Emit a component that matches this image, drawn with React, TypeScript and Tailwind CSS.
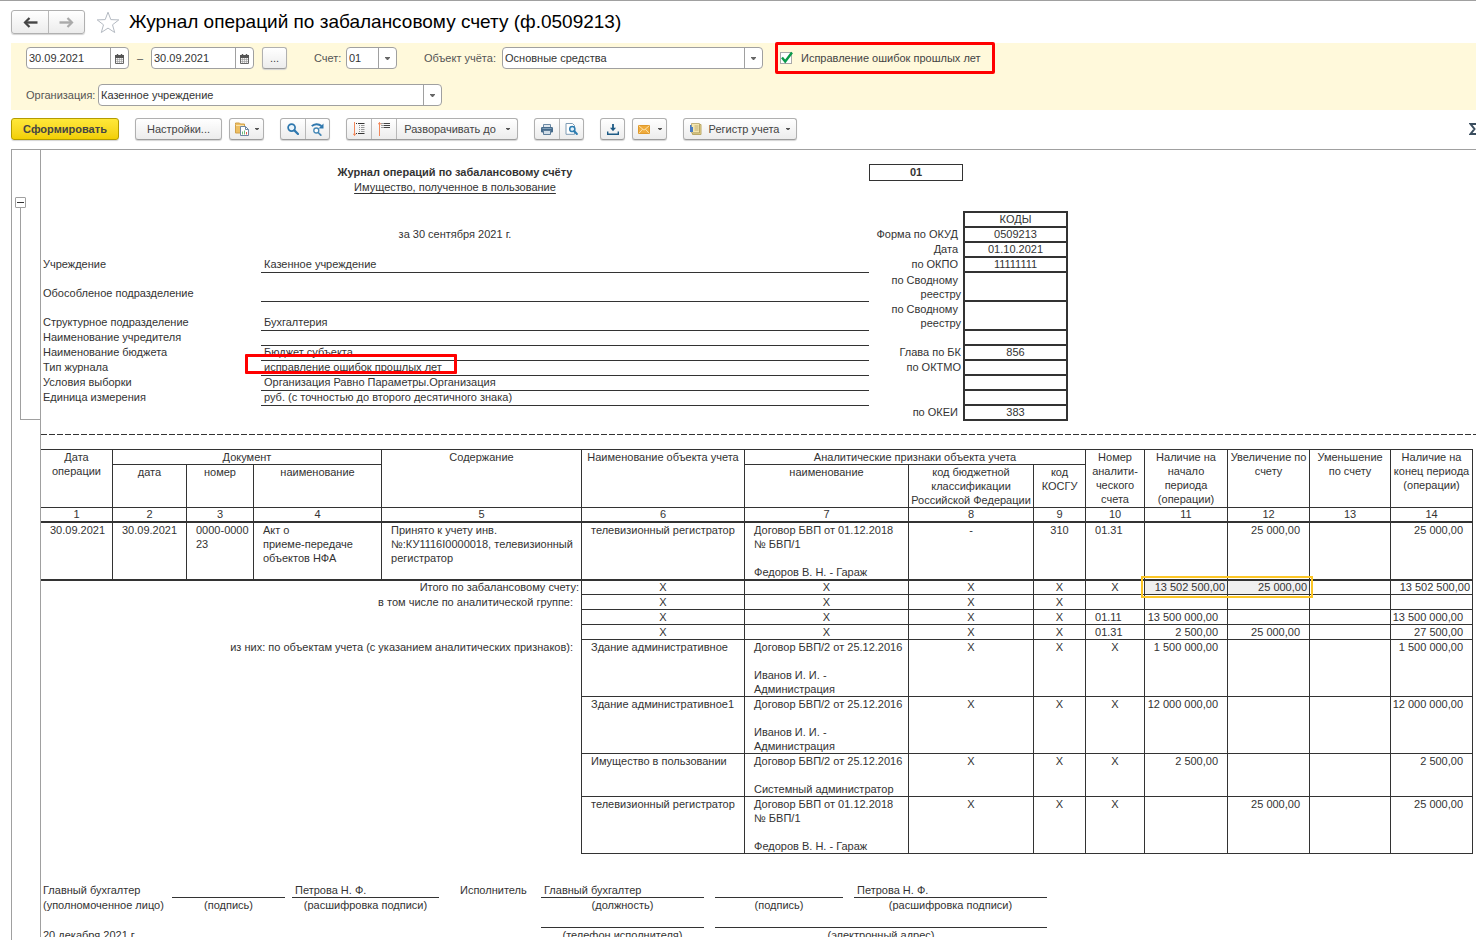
import type { ReactNode } from "react";
import clsx from "clsx";

type HeadRow = {
  label?: string;
  value?: string;
  line?: boolean;
  codeLabel?: string;
  codePad?: string;
  code?: string;
  tall?: boolean;
  marked?: boolean;
};

const headRows: HeadRow[] = [
  { codeLabel: "Дата", codePad: "pr-[5px]", code: "01.10.2021" },
  { label: "Учреждение", value: "Казенное учреждение", line: true, codeLabel: "по ОКПО", codePad: "pr-[5px]", code: "11111111" },
  { label: "Обособленое подразделение", line: true, codeLabel: "по Сводному \nреестру", tall: true },
  { label: "Структурное подразделение", value: "Бухгалтерия", line: true, codeLabel: "по Сводному \nреестру", tall: true },
  { label: "Наименование учредителя", line: true },
  { label: "Наименование бюджета", value: "Бюджет субъекта", line: true, codeLabel: "Глава по БК", code: "856" },
  { label: "Тип журнала", value: "исправление ошибок прошлых лет", line: true, codeLabel: "по ОКТМО", marked: true },
  { label: "Условия выборки", value: "Организация Равно Параметры.Организация", line: true },
  { label: "Единица измерения", value: "руб. (с точностью до второго десятичного знака)", line: true },
  { codeLabel: "по ОКЕИ", codePad: "pr-[5px]", code: "383" },
];

type ObjectRow = {
  label?: string;
  name: string;
  contract: string;
  account: string;
  start?: string;
  plus?: string;
  end?: string;
};

const objectRows: ObjectRow[] = [
  { label: "в том числе по аналитической группе:", name: "X", contract: "X", account: "" },
  { name: "X", contract: "X", account: "01.11", start: "13 500 000,00", end: "13 500 000,00" },
  { name: "X", contract: "X", account: "01.31", start: "2 500,00", plus: "25 000,00", end: "27 500,00" },
  {
    label: "из них: по объектам учета (с указанием аналитических признаков):",
    name: "Здание административное",
    contract: "Договор БВП/2 от 25.12.2016\n\nИванов И. И. -\nАдминистрация",
    account: "X",
    start: "1 500 000,00",
    end: "1 500 000,00",
  },
  {
    name: "Здание административное1",
    contract: "Договор БВП/2 от 25.12.2016\n\nИванов И. И. -\nАдминистрация",
    account: "X",
    start: "12 000 000,00",
    end: "12 000 000,00",
  },
  {
    name: "Имущество в пользовании",
    contract: "Договор БВП/2 от 25.12.2016\n\nСистемный администратор",
    account: "X",
    start: "2 500,00",
    end: "2 500,00",
  },
  {
    name: "телевизионный регистратор",
    contract: "Договор БВП от 01.12.2018\n№ БВП/1\n\nФедоров В. Н. - Гараж",
    account: "X",
    plus: "25 000,00",
    end: "25 000,00",
  },
];

/* ---------- Icons ---------- */

const ArrowIcon = ({ flip, color }: { flip?: boolean; color: string }) => (
  <svg width="15" height="11" viewBox="0 0 15 11" className={clsx(flip && "-scale-x-100")}>
    <path d="M2 5.5h12.500" stroke={color} strokeWidth="2.4" />
    <path d="M6.500 1 2 5.500 6.500 10" fill="none" stroke={color} strokeWidth="2.2" />
  </svg>
);

const StarIcon = () => (
  <svg width="24" height="23" viewBox="0 0 24 23">
    <path
      d="M12 1.2 14.8 8.6 22.8 8.9 16.5 13.8 18.7 21.5 12 17.1 5.3 21.5 7.5 13.8 1.2 8.9 9.2 8.6Z"
      fill="#fff"
      stroke="#b4bac2"
      strokeWidth="1"
    />
  </svg>
);

const CalendarIcon = () => (
  <svg width="9" height="10" viewBox="0 0 9 10">
    <path d="M.5 1.500h8V9.500h-8z" fill="#f4f4f4" stroke="#666" />
    <path d="M0 1h9v3H0z" fill="#555" />
    <path d="M2.500 0v2M6.500 0v2" stroke="#555" strokeWidth="1.400" />
    <path d="M1 5.500h7M1 7.500h7M2.500 4v5M4.500 4v5M6.500 4v5" stroke="#999" strokeWidth=".6" />
  </svg>
);

const Caret = () => (
  <svg width="5" height="3" viewBox="0 0 5 3">
    <path d="M0 0h5v.8L3 3H2L0 .8z" fill="#666" />
  </svg>
);

const SmallCaret = () => (
  <svg width="4" height="2" viewBox="0 0 4 2">
    <path d="M0 0h4v.6L2.600 2H1.400L0 .6z" fill="#555" />
  </svg>
);

const PasteIcon = () => (
  <svg width="14" height="14" viewBox="0 0 14 14">
    <path d="M.5 2.500V1h4l1 1h4v9h-9z" fill="#eebf62" stroke="#d0a04a" />
    <path d="M1 3.500h8" stroke="#fbe3ad" />
    <path d="M5.500 4.500h5l3 3v6h-8z" fill="#fff" stroke="#6d87a3" />
    <path d="M10.500 4.500v3h3" fill="none" stroke="#6d87a3" />
    <path d="M7.500 9.500v3M9.500 8.500v4" stroke="#6dba7b" />
    <path d="M11.500 10v2.500" stroke="#e2574c" />
  </svg>
);

const SearchIcon = () => (
  <svg width="12" height="12" viewBox="0 0 12 12">
    <circle cx="4.600" cy="4.600" r="3.500" fill="#eaf4fb" stroke="#2f78ae" strokeWidth="1.700" />
    <path d="m7.400 7.400 3.600 3.600" stroke="#2f78ae" strokeWidth="2.200" strokeLinecap="round" />
  </svg>
);

const SearchNextIcon = () => (
  <svg width="13" height="13" viewBox="0 0 13 13">
    <path d="M.8 3.200C3 .7 7.500.4 10.500 3" fill="none" stroke="#2f78ae" strokeWidth="1.900" />
    <path d="M12.500.5v5h-5z" fill="#2f78ae" />
    <circle cx="5.300" cy="7.500" r="2.500" fill="#fff" stroke="#4487b5" strokeWidth="1.300" />
    <path d="m7.200 9.500 2.600 2.700" stroke="#4487b5" strokeWidth="1.700" strokeLinecap="round" />
  </svg>
);

const ExpandIcon = () => (
  <svg width="12" height="14" viewBox="0 0 12 14">
    <path d="M1.500 0v13.500M0 11.500l1.500 2 1.500-2" fill="none" stroke="#f2875a" />
    <path d="M3 1.500h1M5 1.500h6.500" stroke="#333" />
    <path d="M6 3.500h1M8 3.500h3.500M6 5.500h1M8 5.500h3.500M6 7.500h1M8 7.500h3.500M6 9.500h1M8 9.500h3.500" stroke="#999" />
    <path d="M3 11.500h1M5 11.500h6.500" stroke="#333" />
  </svg>
);

const CollapseIcon = () => (
  <svg width="12" height="14" viewBox="0 0 12 14">
    <path d="M1.500 .5V14M0 2.500l1.500-2 1.500 2" fill="none" stroke="#f2875a" />
    <path d="M3.500 1.500h1M5.500 1.500H12M3.500 3.500h1M5.500 3.500H12M3.500 5.500h1M5.500 5.500H12" stroke="#444" />
  </svg>
);

const PrinterIcon = () => (
  <svg width="12" height="11" viewBox="0 0 12 11">
    <path d="M2.500.5h7v3h-7z" fill="#dfe7ee" stroke="#6c8aa5" />
    <rect y="3" width="12" height="5.500" rx="1.300" fill="#466b8c" />
    <path d="M2.500 6.500h7v4h-7z" fill="#cfdce7" stroke="#5c7c98" />
    <path d="M1.500 4.500h9" stroke="#8fabc3" strokeWidth=".8" />
  </svg>
);

const PreviewIcon = () => (
  <svg width="13" height="12" viewBox="0 0 13 12">
    <path d="M1 .5h6.500l2 2v8.800H1z" fill="#fff" stroke="#7f9cb5" />
    <circle cx="7.300" cy="6" r="2.600" fill="#e4f1fa" stroke="#2c7cb0" strokeWidth="1.500" />
    <path d="m9.200 8 2.700 3" stroke="#2c7cb0" strokeWidth="1.900" strokeLinecap="round" />
  </svg>
);

const DownloadIcon = () => (
  <svg width="12" height="11" viewBox="0 0 12 11">
    <path d="M6 0v5" stroke="#1c5a85" strokeWidth="1.800" />
    <path d="M3 3.800h6L6 7.200z" fill="#1c5a85" />
    <path d="M.7 7.500v2.700h10.600V7.500" fill="none" stroke="#1c5a85" strokeWidth="1.400" />
  </svg>
);

const MailIcon = () => (
  <svg width="12" height="9" viewBox="0 0 12 9">
    <path d="M.5.5h11v8H.5z" fill="#efab3c" stroke="#e09a2c" />
    <path d="m.8.8 5.200 4.400L11.200.8M1 8.200l3.600-4M11 8.200l-3.600-4" fill="none" stroke="#fde6b5" strokeWidth=".9" />
  </svg>
);

const RegisterIcon = () => (
  <svg width="12" height="12" viewBox="0 0 12 12">
    <path d="M1.500.5h8v9.500h-8z" fill="#f4e7b0" stroke="#c2b27c" />
    <path d="M9.500 1.500h1.500v10H2.500V10h7z" fill="#e9d78e" stroke="#b9a768" />
    <path d="M4.500 3h4M4.500 5h4M4.500 7h4" stroke="#b39f62" strokeWidth=".8" />
    <path d="M0 2h1.500v2H0zM0 4h3v5H0z" fill="#4a7cc4" />
  </svg>
);

/* ---------- Controls ---------- */

const btn =
  "flex h-[22px] items-center justify-center rounded-[3px] border border-[#b0b0b0] border-b-[#9c9c9c] bg-linear-to-b from-white to-[#ececec] text-[#444] shadow-[0_1px_1px_#d4d4d4]";
const part = "flex h-full items-center justify-center border-l border-[#b8b8b8] first:border-l-0";

const DateField = ({ id, label }: { id: string; label: string }) => (
  <div className="flex h-[22px] w-[103px] overflow-hidden rounded-[4px] border border-[#a0a0a0] bg-white">
    <input id={id} aria-label={label} defaultValue="30.09.2021" className="w-[83px] pl-[2px] text-[#333] outline-none" />
    <button aria-label="Выбрать дату" className="flex flex-1 items-center justify-center border-l border-[#a0a0a0] pt-[2px]">
      <CalendarIcon />
    </button>
  </div>
);

const SelectField = ({ id, value, width }: { id: string; value: string; width: string }) => (
  <div className={clsx("flex h-[22px] rounded-[4px] border border-[#a0a0a0] bg-white", width)}>
    <select id={id} className="min-w-0 flex-1 appearance-none pl-[2px] text-[#333] outline-none">
      <option>{value}</option>
    </select>
    <span className="pointer-events-none flex w-[18px] items-center justify-center border-l border-[#a0a0a0]">
      <Caret />
    </span>
  </div>
);

const Filters = () => (
  <section className="ml-[11px] h-[67px] bg-[#fff9db] px-[15px] pt-1 text-[#555]">
    <div className="flex items-center">
      <DateField id="from" label="Начало периода" />
      <span className="w-[22px] text-center">–</span>
      <DateField id="to" label="Конец периода" />
      <button className={clsx(btn, "ml-2 w-[25px]")}>...</button>
      <label htmlFor="account" className="ml-[27px] w-8">Счет:</label>
      <SelectField id="account" value="01" width="w-[51px]" />
      <label htmlFor="object" className="ml-[27px] w-[78px] whitespace-nowrap">Объект учёта:</label>
      <SelectField id="object" value="Основные средства" width="w-[261px]" />
      <div className="relative ml-[17px]">
        <label className="flex items-center whitespace-nowrap text-[#444]">
          <input type="checkbox" defaultChecked className="peer size-3 appearance-none border border-[#a9a9a9] bg-white" />
          <svg width="13" height="13" viewBox="0 0 13 13" className="invisible -ml-3 mb-[2px] peer-checked:visible">
            <path d="m2 6.500 3.200 4L12 1.500" fill="none" stroke="#0a9a4a" strokeWidth="2.400" />
          </svg>
          <span className="ml-2">Исправление ошибок прошлых лет</span>
        </label>
        <span className="pointer-events-none absolute -top-2 -left-[5px] h-8 w-[220px] rounded-[2px] border-3 border-[#ff0000]" />
      </div>
    </div>
    <div className="mt-[15px] flex items-center">
      <label htmlFor="org" className="w-[72px] whitespace-nowrap">Организация:</label>
      <SelectField id="org" value="Казенное учреждение" width="w-[344px]" />
    </div>
  </section>
);

const Toolbar = () => (
  <div className="flex items-center pt-2 pl-[11px]">
    <button className="h-[22px] w-[108px] rounded-[3px] border border-[#b39c00] bg-linear-to-b from-[#ffe838] to-[#f2cf00] font-bold text-[#444] shadow-[0_1px_1px_#d4d4d4]">
      Сформировать
    </button>
    <button className={clsx(btn, "ml-4 w-[87px]")}>Настройки...</button>
    <button aria-label="Вставить" className={clsx(btn, "ml-[7px] w-[35px] gap-[6px]")}><PasteIcon /><SmallCaret /></button>
    <div className={clsx(btn, "ml-4")}>
      <button aria-label="Найти" className={clsx(part, "w-6")}><SearchIcon /></button>
      <button aria-label="Найти далее" className={clsx(part, "w-6")}><SearchNextIcon /></button>
    </div>
    <div className={clsx(btn, "ml-4")}>
      <button aria-label="Развернуть" className={clsx(part, "w-6")}><ExpandIcon /></button>
      <button aria-label="Свернуть" className={clsx(part, "w-[25px]")}><CollapseIcon /></button>
      <button className={clsx(part, "w-[121px] gap-[10px] whitespace-nowrap")}>Разворачивать до<SmallCaret /></button>
    </div>
    <div className={clsx(btn, "ml-4")}>
      <button aria-label="Печать" className={clsx(part, "w-6")}><PrinterIcon /></button>
      <button aria-label="Просмотр" className={clsx(part, "w-6")}><PreviewIcon /></button>
    </div>
    <button aria-label="Сохранить" className={clsx(btn, "ml-4 w-[25px]")}><DownloadIcon /></button>
    <button aria-label="Отправить" className={clsx(btn, "ml-[7px] w-[35px] gap-2")}><MailIcon /><SmallCaret /></button>
    <button className={clsx(btn, "ml-4 w-[114px] gap-[7px] whitespace-nowrap")}>
      <RegisterIcon />Регистр учета<SmallCaret />
    </button>
    <button aria-label="Сумма" className="ml-auto w-[7px] overflow-hidden">
      <svg width="12" height="12" viewBox="0 0 12 12">
        <path d="M10.500 3V1H1.500l4 5-4 5h9V9" fill="none" stroke="#3a4d5e" strokeWidth="2" />
      </svg>
    </button>
  </div>
);

/* ---------- Report ---------- */

const codeCell = "border-2 border-t-0 border-[#333] text-center";

const ReportHead = () => (
  <table className="w-full table-fixed border-separate border-spacing-0 leading-[13px]">
    <colgroup>
      <col className="w-[220px]" />
      <col className="w-[608px]" />
      <col className="w-[94px]" />
      <col className="w-[105px]" />
      <col />
    </colgroup>
    <tbody>
      <tr className="h-[17px]">
        <th colSpan={2} className="font-bold">Журнал операций по забалансовому счёту</th>
        <td className="border border-[#333] text-center font-bold">01</td>
      </tr>
      <tr className="h-[15px] align-top">
        <td colSpan={2} className="text-center underline underline-offset-2">Имущество, полученное в пользование</td>
      </tr>
      <tr className="h-[15px]" />
      <tr className="h-[17px]">
        <td colSpan={3} />
        <td className="border-2 border-[#333] text-center">КОДЫ</td>
      </tr>
      <tr className="h-[15px] align-top">
        <td colSpan={2} className="text-center">за 30 сентября 2021 г.</td>
        <td className="pr-[5px] text-right">Форма по ОКУД</td>
        <td className={codeCell}>0509213</td>
      </tr>
      {headRows.map((row, i) => (
        <tr key={i} className={row.tall ? "h-[29px]" : "h-[15px]"}>
          <td className="pb-[2px] pl-[2px] align-bottom">{row.label}</td>
          <td className={clsx("relative pb-px pl-[3px] align-bottom", row.line && "border-b border-[#333]")}>
            {row.value}
            {row.marked && (
              <span className="absolute -top-[7px] -left-4 h-5 w-[212px] rounded-[1px] border-3 border-[#ff0000]" />
            )}
          </td>
          <td className={clsx("text-right align-top whitespace-pre", row.tall && "leading-[14px]", row.codePad ?? "pr-[2px]")}>
            {row.codeLabel}
          </td>
          <td className={codeCell}>{row.code}</td>
        </tr>
      ))}
    </tbody>
  </table>
);

const cell = "border-r border-b border-[#333] align-top whitespace-pre";
const thick = "border-b-2";

const Th = ({ children, ...rest }: { children: ReactNode; colSpan?: number; rowSpan?: number }) => (
  <th className={clsx(cell, "font-normal")} {...rest}>{children}</th>
);

const Journal = () => (
  <table className="w-full table-fixed border-separate border-spacing-0 border-t border-[#333] leading-[14px]">
    <colgroup>
      <col className="w-[72px]" />
      <col className="w-[74px]" />
      <col className="w-[67px]" />
      <col className="w-[128px]" />
      <col className="w-[200px]" />
      <col className="w-[163px]" />
      <col className="w-[164px]" />
      <col className="w-[125px]" />
      <col className="w-[52px]" />
      <col className="w-[59px]" />
      <col className="w-[83px]" />
      <col className="w-[82px]" />
      <col className="w-[81px]" />
      <col className="w-[82px]" />
    </colgroup>
    <thead>
      <tr>
        <Th rowSpan={2}>{"Дата\nоперации"}</Th>
        <Th colSpan={3}>Документ</Th>
        <Th rowSpan={2}>Содержание</Th>
        <Th rowSpan={2}>Наименование объекта учета</Th>
        <Th colSpan={3}>Аналитические признаки объекта учета</Th>
        <Th rowSpan={2}>{"Номер\nаналити-\nческого\nсчета"}</Th>
        <Th rowSpan={2}>{"Наличие на\nначало\nпериода\n(операции)"}</Th>
        <Th rowSpan={2}>{"Увеличение по\nсчету"}</Th>
        <Th rowSpan={2}>{"Уменьшение\nпо счету"}</Th>
        <Th rowSpan={2}>{"Наличие на\nконец периода\n(операции)"}</Th>
      </tr>
      <tr>
        <Th>дата</Th>
        <Th>номер</Th>
        <Th>наименование</Th>
        <Th>наименование</Th>
        <Th>{"код бюджетной\nклассификации\nРоссийской Федерации"}</Th>
        <Th>{"код\nКОСГУ"}</Th>
      </tr>
      <tr className="leading-[13px]">
        {Array.from({ length: 14 }, (_, i) => (
          <th key={i} className={clsx(cell, thick, "font-normal")}>{i + 1}</th>
        ))}
      </tr>
    </thead>
    <tbody>
      <tr>
        <td className={clsx(cell, thick, "pl-[9px]")}>30.09.2021</td>
        <td className={clsx(cell, thick, "pl-[9px]")}>30.09.2021</td>
        <td className={clsx(cell, thick, "pl-[9px]")}>{"0000-0000\n23"}</td>
        <td className={clsx(cell, thick, "pl-[9px]")}>{"Акт о\nприеме-передаче\nобъектов НФА"}</td>
        <td className={clsx(cell, thick, "pl-[9px]")}>{"Принято к учету инв.\n№:КУ1116I0000018, телевизионный\nрегистратор"}</td>
        <td className={clsx(cell, thick, "pl-[9px]")}>телевизионный регистратор</td>
        <td className={clsx(cell, thick, "pl-[9px]")}>{"Договор БВП от 01.12.2018\n№ БВП/1\n\nФедоров В. Н. - Гараж"}</td>
        <td className={clsx(cell, thick, "text-center")}>-</td>
        <td className={clsx(cell, thick, "text-center")}>310</td>
        <td className={clsx(cell, thick, "pl-[9px]")}>01.31</td>
        <td className={clsx(cell, thick)} />
        <td className={clsx(cell, thick, "pr-[9px] text-right")}>25 000,00</td>
        <td className={clsx(cell, thick)} />
        <td className={clsx(cell, thick, "pr-[9px] text-right")}>25 000,00</td>
      </tr>
      <tr className="leading-[13px]">
        <td colSpan={5} className="border-r border-[#333] pr-[2px] text-right align-top">Итого по забалансовому счету:</td>
        {Array.from({ length: 5 }, (_, i) => (
          <td key={i} className={clsx(cell, "text-center")}>X</td>
        ))}
        <td className={clsx(cell, "relative bg-[#f0f0f0] pr-[2px] text-right")}>
          13 502 500,00
          <span className="absolute -top-[5px] -left-1 z-10 h-[22px] w-[172px] border-2 border-[#fcc626]" />
        </td>
        <td className={clsx(cell, "bg-[#f0f0f0] pr-[2px] text-right")}>25 000,00</td>
        <td className={cell} />
        <td className={clsx(cell, "pr-[2px] text-right")}>13 502 500,00</td>
      </tr>
      {objectRows.map((row, i) => (
        <tr key={i}>
          <td colSpan={5} className="border-r border-[#333] pr-2 text-right align-top">{row.label}</td>
          <td className={clsx(cell, row.name === "X" ? "text-center" : "pl-[9px]")}>{row.name}</td>
          <td className={clsx(cell, row.contract === "X" ? "text-center" : "pl-[9px]")}>{row.contract}</td>
          <td className={clsx(cell, "text-center")}>X</td>
          <td className={clsx(cell, "text-center")}>X</td>
          <td className={clsx(cell, row.account === "X" ? "text-center" : "pl-[9px]")}>{row.account}</td>
          <td className={clsx(cell, "pr-[9px] text-right")}>{row.start}</td>
          <td className={clsx(cell, "pr-[9px] text-right")}>{row.plus}</td>
          <td className={cell} />
          <td className={clsx(cell, "pr-[9px] text-right")}>{row.end}</td>
        </tr>
      ))}
    </tbody>
  </table>
);

const Sign = ({ text, caption, span }: { text?: string; caption: string; span?: string }) => (
  <div className={span}>
    <div className="h-[15px] border-b border-[#333] pl-[3px]">{text}</div>
    <div className="h-[15px] text-center">{caption}</div>
  </div>
);

const Signatures = () => (
  <div className="mt-[29px] grid grid-cols-[131px_113px_7px_147px_102px_163px_11px_128px_11px_193px] leading-[14px] whitespace-nowrap">
    <div className="pl-[2px] leading-[15px]">
      Главный бухгалтер
      <br />
      (уполномоченное лицо)
    </div>
    <Sign caption="(подпись)" />
    <i />
    <Sign text="Петрова Н. Ф." caption="(расшифровка подписи)" />
    <div className="pl-[21px]">Исполнитель</div>
    <Sign text="Главный бухгалтер" caption="(должность)" />
    <i />
    <Sign caption="(подпись)" />
    <i />
    <Sign text="Петрова Н. Ф." caption="(расшифровка подписи)" />
    <div className="col-span-5 pt-[15px] pl-[2px]">20 декабря 2021 г.</div>
    <Sign caption="(телефон исполнителя)" />
    <i />
    <Sign caption="(электронный адрес)" span="col-span-3" />
  </div>
);

const App = () => {
  return (
    <div className="flex h-screen flex-col overflow-hidden border-t border-[#a0a0a0] bg-white font-['Liberation_Sans',Arial,sans-serif] text-[11px] text-[#333]">
      <header className="flex h-[42px] shrink-0 items-center pl-[11px]">
        <div className="flex h-6 rounded-[3px] border border-[#b0b0b0] bg-linear-to-b from-white to-[#ececec] shadow-[0_1px_1px_#d4d4d4]">
          <button aria-label="Назад" className={clsx(part, "w-9")}><ArrowIcon color="#444" /></button>
          <button aria-label="Вперед" className={clsx(part, "w-9")}><ArrowIcon flip color="#aaa" /></button>
        </div>
        <button aria-label="В избранное" className="ml-[11px]"><StarIcon /></button>
        <h1 className="ml-[9px] text-[19px] leading-6 whitespace-nowrap text-black">
          Журнал операций по забалансовому счету (ф.0509213)
        </h1>
      </header>

      <Filters />
      <Toolbar />

      <main className="mt-[9px] ml-[11px] flex min-h-0 flex-1 border-t border-l border-[#a0a0a0] pb-[3px]">
        {/* группировка строк */}
        <div className="w-[29px] shrink-0 border-r border-[#a0a0a0] pt-[47px]">
          <button aria-label="Свернуть группу" className="ml-[3px] flex size-[11px] items-center justify-center rounded-[1px] border border-[#a0a0a0]">
            <span className="h-px w-[7px] bg-[#333]" />
          </button>
          <div className="ml-2 h-[212px] border-b border-l border-[#a0a0a0]" />
        </div>
        <div className="min-w-0 flex-1 overflow-hidden pt-[14px]">
          <ReportHead />
          <div className="mt-[13px] mb-[14px] h-px bg-[repeating-linear-gradient(90deg,#333_0_6px,transparent_6px_8px)]" />
          <div className="pr-[3px]">
            <Journal />
          </div>
          <Signatures />
        </div>
      </main>
    </div>
  );
};

export default App;
